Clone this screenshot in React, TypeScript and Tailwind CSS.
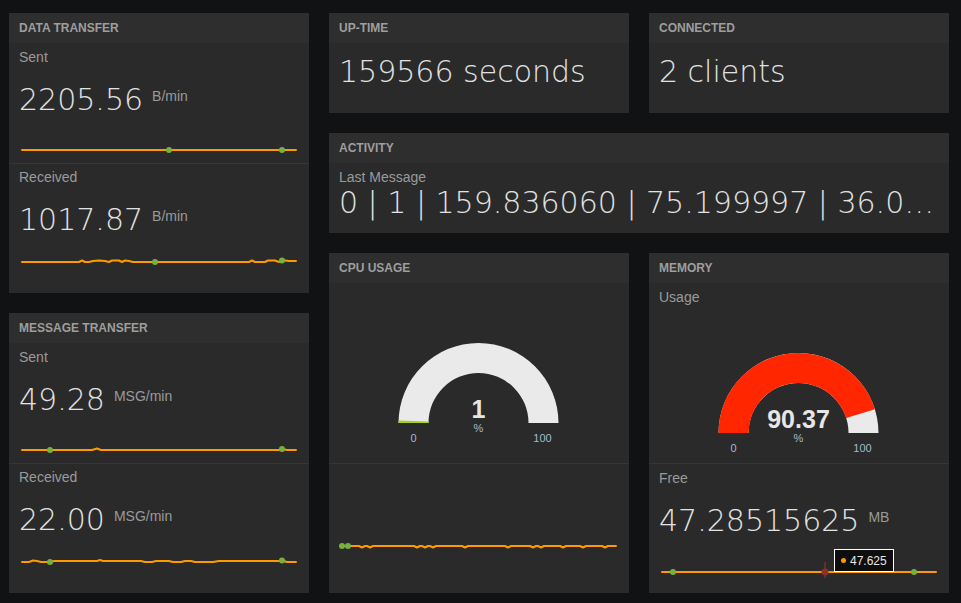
import React from "react";

type P = [number, number];

const ORANGE = "#ff9900";
const GREEN = "#76b041";

function Spark({
  pts,
  dots,
  cls,
  extra,
}: {
  pts: P[];
  dots: P[];
  cls: string;
  extra?: React.ReactNode;
}) {
  const d = pts.map((p, i) => `${i ? "L" : "M"}${p[0]} ${7 + p[1]}`).join(" ");
  return (
    <svg width={300} height={14} className={"block overflow-visible " + cls}>
      <path d={d} stroke={ORANGE} strokeWidth={2} fill="none" strokeLinejoin="round" strokeLinecap="round" />
      {extra}
      {dots.map(([x, y], i) => (
        <circle key={i} cx={x} cy={7 + y} r={3} fill={GREEN} />
      ))}
    </svg>
  );
}

function Panel({
  title,
  className,
  children,
}: {
  title: string;
  className: string;
  children: React.ReactNode;
}) {
  return (
    <div className={"flex flex-col bg-[#2a2a2a] " + className}>
      <div className="h-[30px] shrink-0 bg-[#2e2e2e] px-[10px] flex items-center text-[12px] font-bold uppercase text-[#9e9e9e] font-['Liberation_Sans',Arial,sans-serif]">
        {title}
      </div>
      {children}
    </div>
  );
}

function Label({ children }: { children: React.ReactNode }) {
  return (
    <div className="px-[10px] text-[14px] leading-[16px] text-[#9a9a9a] font-['Liberation_Sans',Arial,sans-serif]">
      {children}
    </div>
  );
}

function BigValue({ value, unit, cls }: { value: string; unit?: string; cls: string }) {
  return (
    <div className={"px-[10px] flex items-start " + cls}>
      <span className="text-[30px] leading-[36px] font-extralight text-[#e2e2e2] font-['DejaVu_Sans',sans-serif] whitespace-nowrap">
        {value}
      </span>
      {unit && (
        <span className="ml-[9px] mt-[6px] text-[14px] leading-[16px] text-[#9a9a9a] font-['Liberation_Sans',Arial,sans-serif]">
          {unit}
        </span>
      )}
    </div>
  );
}

function arcPath(cx: number, cy: number, ro: number, ri: number, f0: number, f1: number) {
  const pt = (r: number, f: number) => {
    const t = Math.PI * (1 - f);
    return [cx + r * Math.cos(t), cy - r * Math.sin(t)];
  };
  const [ax, ay] = pt(ro, f0);
  const [bx, by] = pt(ro, f1);
  const [cx2, cy2] = pt(ri, f1);
  const [dx, dy] = pt(ri, f0);
  return `M${ax} ${ay} A${ro} ${ro} 0 0 1 ${bx} ${by} L${cx2} ${cy2} A${ri} ${ri} 0 0 0 ${dx} ${dy} Z`;
}

function Gauge({
  value,
  frac,
  color,
  height,
  cy,
}: {
  value: string;
  frac: number;
  color: string;
  height: number;
  cy: number;
}) {
  const cx = 149.5;
  return (
    <svg width={300} height={height} className="block">
      <path d={arcPath(cx, cy, 80, 50, 0, 1)} fill="#ebeaeb" />
      <path d={arcPath(cx, cy, 80, 50, 0, frac)} fill={color} />
      <text
        x={cx}
        y={cy - 5}
        textAnchor="middle"
        fontFamily="Liberation Sans, Arial, sans-serif"
        fontWeight="bold"
        fontSize={25}
        fill="#e6e6e6"
      >
        {value}
      </text>
      <text x={cx} y={cy + 9} textAnchor="middle" fontFamily="Liberation Sans, Arial, sans-serif" fontSize={11} fill="#a6b9cc">
        %
      </text>
      <text x={cx - 65} y={cy + 18.5} textAnchor="middle" fontFamily="Liberation Sans, Arial, sans-serif" fontSize={11} fill="#a6b9cc">
        0
      </text>
      <text x={cx + 64} y={cy + 18.5} textAnchor="middle" fontFamily="Liberation Sans, Arial, sans-serif" fontSize={11} fill="#a6b9cc">
        100
      </text>
    </svg>
  );
}

const dataRecv: P[] = [
  [13, 0], [70, 0], [73, -1.5], [76, 0], [80, 0], [84, -1], [90, -1.5], [96, -1], [100, 0], [103, -1.5],
  [110, -1.5], [113, 0], [116, -1.5], [120, -1], [124, 0], [240, 0], [243, -1.5], [246, 0], [256, 0],
  [259, -1.5], [266, -1.5], [270, 0], [273, -1.5], [276, -1.5], [280, -1], [287, -1],
];

const msgSent: P[] = [[13, 0], [83, 0], [88, -1.5], [92, 0], [270, 0], [273, -1], [278, 0], [287, 0]];

const msgRecv: P[] = [
  [13, 0], [20, 0], [24, -1.5], [28, -1], [32, 0], [41, 0], [45, -1], [88, -1], [91, -2], [94, -1],
  [132, -1], [136, 0], [143, 0], [147, -1], [160, -1], [164, 0], [172, 0], [176, -1], [182, -1], [186, 0],
  [204, 0], [210, -1], [270, -1], [273, -1.5], [278, 0], [287, 0],
];

const cpuDips = [33, 41, 88, 96, 104, 136, 179, 204, 212, 234, 254, 276];
const cpuPts: P[] = (() => {
  const out: P[] = [[11, 0]];
  cpuDips.forEach((x) => {
    out.push([x - 3, 0], [x, 1.5], [x + 3, 0]);
  });
  out.push([287, 0]);
  return out;
})();

export default function App() {
  return (
    <div className="w-[961px] h-[603px] bg-[#111214] flex gap-[20px] pl-[9px] pt-[13px] overflow-hidden">
      <div className="flex flex-col gap-[20px] w-[300px]">
        <Panel title="Data Transfer" className="h-[280px]">
          <div className="h-[120px] pt-[6px] shrink-0">
            <Label>Sent</Label>
            <BigValue value="2205.56" unit="B/min" cls="mt-[17px]" />
            <Spark pts={[[13, 0], [287, 0]]} dots={[[160, 0], [273, 0]]} cls="mt-[25px]" />
          </div>
          <div className="flex-1 border-t border-[#363636] pt-[5px]">
            <Label>Received</Label>
            <BigValue value="1017.87" unit="B/min" cls="mt-[17px]" />
            <Spark pts={dataRecv} dots={[[146, 0], [273, -1.5]]} cls="mt-[17px]" />
          </div>
        </Panel>
        <Panel title="Message Transfer" className="h-[280px]">
          <div className="h-[120px] pt-[6px] shrink-0">
            <Label>Sent</Label>
            <BigValue value="49.28" unit="MSG/min" cls="mt-[17px]" />
            <Spark pts={msgSent} dots={[[41, 0], [273, -1]]} cls="mt-[25px]" />
          </div>
          <div className="flex-1 border-t border-[#363636] pt-[5px]">
            <Label>Received</Label>
            <BigValue value="22.00" unit="MSG/min" cls="mt-[17px]" />
            <Spark pts={msgRecv} dots={[[41, 0], [273, -1.5]]} cls="mt-[17px]" />
          </div>
        </Panel>
      </div>

      <div className="grid grid-cols-[300px_300px] gap-[20px] content-start">
        <Panel title="Up-time" className="h-[100px]">
          <BigValue value="159566 seconds" cls="mt-[11px]" />
        </Panel>
        <Panel title="Connected" className="h-[100px]">
          <BigValue value="2 clients" cls="mt-[11px]" />
        </Panel>
        <Panel title="Activity" className="h-[100px] col-span-2">
          <div className="pt-[6px]">
            <Label>Last Message</Label>
            <div className="pl-[10px] pr-[12px] text-[30px] leading-[36px] font-extralight text-[#e2e2e2] font-['DejaVu_Sans',sans-serif] whitespace-nowrap overflow-hidden text-ellipsis">
              0 | 1 | 159.836060 | 75.199997 | 36.000000 | 1
            </div>
          </div>
        </Panel>
        <Panel title="CPU Usage" className="h-[340px]">
          <div className="h-[180px] shrink-0">
            <Gauge value="1" frac={0.01} color="#a6d11b" height={180} cy={140} />
          </div>
          <div className="flex-1 border-t border-[#363636]">
            <Spark pts={cpuPts} dots={[[13, 0], [19, 0]]} cls="mt-[75px]" />
          </div>
        </Panel>
        <Panel title="Memory" className="h-[340px]">
          <div className="h-[180px] shrink-0 pt-[6px]">
            <Label>Usage</Label>
            <Gauge value="90.37" frac={0.9037} color="#ff2600" height={158} cy={128} />
          </div>
          <div className="relative flex-1 border-t border-[#363636] pt-[6px]">
            <Label>Free</Label>
            <BigValue value="47.28515625" unit="MB" cls="mt-[17px]" />
            <Spark
              pts={[[13, 0], [287, 0]]}
              dots={[[24, 0], [265, 0]]}
              cls="mt-[26px]"
              extra={
                <g>
                  <line x1={176} y1={-3} x2={176} y2={13} stroke="#8a3324" strokeWidth={1.2} />
                  <circle cx={176} cy={7} r={3.5} fill="#8a3324" />
                </g>
              }
            />
            <div className="absolute left-[185px] top-[85px] h-[23px] px-[6px] flex items-center gap-[4px] bg-[#0e0e0e] border border-white text-[12px] text-[#e6e6e6] font-['Liberation_Sans',Arial,sans-serif]">
              <span className="w-[5px] h-[5px] rounded-full bg-[#ff9900]" />
              <span>47.625</span>
            </div>
          </div>
        </Panel>
      </div>
    </div>
  );
}
